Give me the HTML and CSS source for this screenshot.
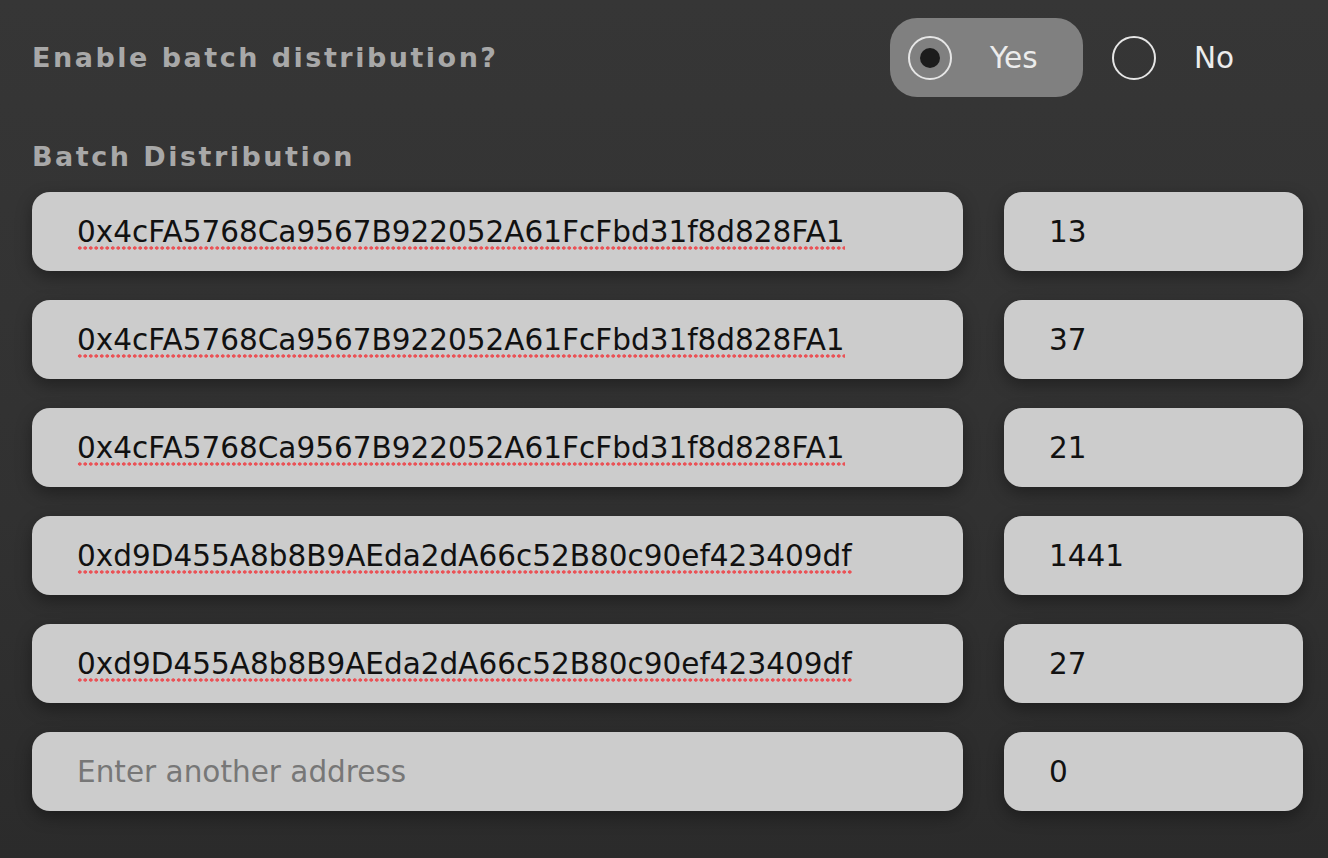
FILE: index.html
```html
<!DOCTYPE html>
<html lang="en">
<head>
<meta charset="utf-8">
<title>Batch distribution</title>
<link rel="stylesheet" href="styles.css">
</head>
<body>
<main class="page">
  <div class="header">
    <h2 class="label">Enable batch distribution?</h2>
    <div class="radio-group" role="radiogroup">
      <div class="option selected" role="radio" aria-checked="true">
        <span class="circle"><span class="dot"></span></span>
        <span class="option-text">Yes</span>
      </div>
      <div class="option" role="radio" aria-checked="false">
        <span class="circle"></span>
        <span class="option-text">No</span>
      </div>
    </div>
  </div>

  <h2 class="label section-title">Batch Distribution</h2>

  <div class="rows">
    <div class="row">
      <div class="field"><span class="misspelled">0x4cFA5768Ca9567B922052A61FcFbd31f8d828FA1</span></div>
      <div class="field amount">13</div>
    </div>
    <div class="row">
      <div class="field"><span class="misspelled">0x4cFA5768Ca9567B922052A61FcFbd31f8d828FA1</span></div>
      <div class="field amount">37</div>
    </div>
    <div class="row">
      <div class="field"><span class="misspelled">0x4cFA5768Ca9567B922052A61FcFbd31f8d828FA1</span></div>
      <div class="field amount">21</div>
    </div>
    <div class="row">
      <div class="field"><span class="misspelled">0xd9D455A8b8B9AEda2dA66c52B80c90ef423409df</span></div>
      <div class="field amount">1441</div>
    </div>
    <div class="row">
      <div class="field"><span class="misspelled">0xd9D455A8b8B9AEda2dA66c52B80c90ef423409df</span></div>
      <div class="field amount">27</div>
    </div>
    <div class="row">
      <div class="field placeholder">Enter another address</div>
      <div class="field amount">0</div>
    </div>
  </div>
</main>
</body>
</html>
```

FILE: styles.css
```css
html, body {
  margin: 0;
  padding: 0;
  height: 100%;
}

body {
  background: linear-gradient(to bottom, #363636 0%, #313131 60%, #2b2b2b 100%);
  font-family: "DejaVu Sans", "Liberation Sans", sans-serif;
  overflow: hidden;
}

.page {
  padding: 18px 25px 0 32px;
}

.header {
  display: flex;
  align-items: center;
  justify-content: space-between;
  height: 79px;
}

.label {
  margin: 0;
  font-size: 27px;
  font-weight: bold;
  letter-spacing: 2.5px;
  line-height: 32px;
  color: #a8a8a8;
}

.radio-group {
  display: flex;
  gap: 11px;
  margin-right: 16px;
}

.option {
  width: 193px;
  height: 79px;
  box-sizing: border-box;
  padding-left: 18px;
  display: flex;
  align-items: center;
  border-radius: 27px;
}

.option.selected {
  background: #808080;
}

.circle {
  width: 44px;
  height: 44px;
  box-sizing: border-box;
  border: 2px solid #e6e6e6;
  border-radius: 50%;
  display: flex;
  align-items: center;
  justify-content: center;
  flex: none;
}

.dot {
  width: 20px;
  height: 20px;
  border-radius: 50%;
  background: #1c1c1c;
}

.option-text {
  margin-left: 38px;
  font-size: 29.5px;
  color: #ececec;
}

.section-title {
  margin-top: 44px;
  margin-bottom: 19px;
}

.rows {
  display: flex;
  flex-direction: column;
  gap: 29px;
}

.row {
  display: grid;
  grid-template-columns: 1fr 299px;
  column-gap: 41px;
}

.field {
  height: 79px;
  box-sizing: border-box;
  padding: 2px 20px 0 45px;
  line-height: 77px;
  background: #cccccc;
  border-radius: 18px;
  box-shadow: 0 6px 16px rgba(0, 0, 0, 0.35);
  font-size: 29.5px;
  color: #111111;
  white-space: nowrap;
  overflow: hidden;
}

.field.placeholder {
  color: #777777;
}

.misspelled {
  padding-bottom: 1px;
  background-image: radial-gradient(circle, #ea5256 1.6px, rgba(234, 82, 86, 0) 2.2px);
  background-size: 5.5px 4.5px;
  background-repeat: repeat-x;
  background-position: left bottom;
}
```
